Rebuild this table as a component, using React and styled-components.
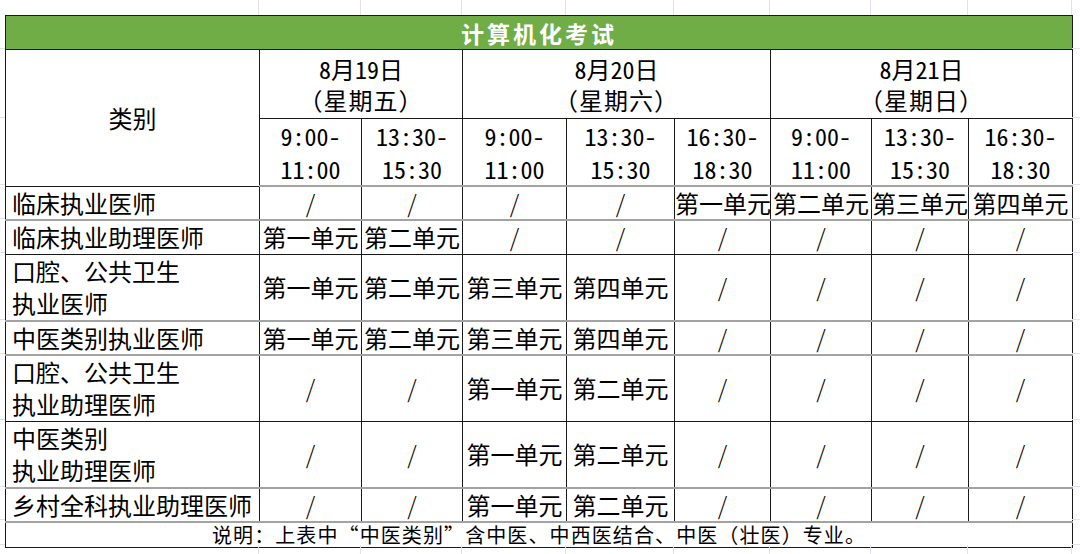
import React from 'react';
import styled, { createGlobalStyle } from 'styled-components';

const COLS = [254, 102, 101, 104, 108, 96, 101, 97, 104];
// heights of the sheet rows (used by the grid margins)
const ROWS = [34, 69, 67, 34, 34, 67, 34, 66, 67, 33, 25];
// the table rows themselves; the time row gives back what its thick border adds
const TABLE_ROWS = [34, 69, 65, 34, 34, 67, 34, 66, 67, 33, 25];

const DATES = [
  { day: '8月19日', week: '（星期五）', span: 2 },
  { day: '8月20日', week: '（星期六）', span: 3 },
  { day: '8月21日', week: '（星期日）', span: 3 },
];

const TIMES = [
  ['9:00-', '11:00'],
  ['13:30-', '15:30'],
  ['9:00-', '11:00'],
  ['13:30-', '15:30'],
  ['16:30-', '18:30'],
  ['9:00-', '11:00'],
  ['13:30-', '15:30'],
  ['16:30-', '18:30'],
];

const S = '/';
const U1 = '第一单元';
const U2 = '第二单元';
const U3 = '第三单元';
const U4 = '第四单元';

// line: how the bottom border of the row is drawn
const BODY = [
  { name: ['临床执业医师'], cells: [S, S, S, S, U1, U2, U3, U4], line: 'soft' },
  { name: ['临床执业助理医师'], cells: [U1, U2, S, S, S, S, S, S], line: 'hard' },
  { name: ['口腔、公共卫生', '执业医师'], cells: [U1, U2, U3, U4, S, S, S, S], line: 'soft' },
  { name: ['中医类别执业医师'], cells: [U1, U2, U3, U4, S, S, S, S], line: 'soft' },
  { name: ['口腔、公共卫生', '执业助理医师'], cells: [S, S, U1, U2, S, S, S, S], line: 'hard' },
  { name: ['中医类别', '执业助理医师'], cells: [S, S, U1, U2, S, S, S, S], line: 'soft' },
  { name: ['乡村全科执业助理医师'], cells: [S, S, U1, U2, S, S, S, S], line: 'soft' },
];

const GlobalStyle = createGlobalStyle`
  html, body {
    margin: 0;
    padding: 0;
    background: #ffffff;
  }
  body {
    font-family: "Noto Sans CJK SC", "Noto Sans", sans-serif;
    color: #000;
  }
`;

const App = () => {
  return (
    <>
      <GlobalStyle />
      <Sheet>
        <Corner />
        <TopStrip>
          {COLS.map((w, i) => (
            <Tick key={i} style={{ width: w }} />
          ))}
        </TopStrip>
        <Corner />

        <SideStrip>
          {ROWS.map((h, i) => (
            <SideTick key={i} style={{ height: h }} />
          ))}
        </SideStrip>

        <Table>
          <colgroup>
            {COLS.map((w, i) => (
              <col key={i} style={{ width: w }} />
            ))}
          </colgroup>
          <tbody>
            <Row $h={TABLE_ROWS[0]} $line="hard">
              <Title colSpan={9}>计算机化考试</Title>
            </Row>
            <Row $h={TABLE_ROWS[1]} $line="hard">
              <Head rowSpan={2}>类别</Head>
              {DATES.map((d) => (
                <DateCell key={d.day} colSpan={d.span}>
                  <Day>{d.day}</Day>
                  <Week>{d.week}</Week>
                </DateCell>
              ))}
            </Row>
            <Row $h={TABLE_ROWS[2]} $line="soft">
              {TIMES.map((t, i) => (
                <TimeCell key={i}>
                  {t[0]}
                  <br />
                  {t[1]}
                </TimeCell>
              ))}
            </Row>
            {BODY.map((r, i) => (
              <Row key={i} $h={TABLE_ROWS[i + 3]} $line={r.line}>
                <Name>
                  {r.name.map((n, j) => (
                    <React.Fragment key={j}>
                      {j > 0 && <br />}
                      {n}
                    </React.Fragment>
                  ))}
                </Name>
                {r.cells.map((c, j) => (
                  <Cell key={j} $slash={c === S}>
                    {c}
                  </Cell>
                ))}
              </Row>
            ))}
            <Row $h={TABLE_ROWS[10]} $line="hard">
              <Note colSpan={9}>说明：上表中“中医类别”含中医、中西医结合、中医（壮医）专业。</Note>
            </Row>
          </tbody>
        </Table>

        <SideStrip>
          {ROWS.map((h, i) => (
            <SideTick key={i} style={{ height: h }} />
          ))}
        </SideStrip>

        <Corner />
        <TopStrip>
          {COLS.map((w, i) => (
            <Tick key={i} style={{ width: w }} />
          ))}
        </TopStrip>
        <Corner />
      </Sheet>
    </>
  );
};

export default App;

const GRID = '#dfe2ea';

const Sheet = styled.div`
  width: 1080px;
  height: 554px;
  display: grid;
  grid-template-columns: 5px 1067px 1fr;
  grid-template-rows: 15px 530px 1fr;
  overflow: hidden;
  background: #fff;
`;

const Corner = styled.div``;

const TopStrip = styled.div`
  display: flex;
`;

const Tick = styled.div`
  flex: none;
  border-right: 1px solid ${GRID};
  box-sizing: border-box;
`;

const SideStrip = styled.div`
  display: flex;
  flex-direction: column;
`;

const SideTick = styled.div`
  flex: none;
  border-bottom: 1px solid ${GRID};
  box-sizing: border-box;
`;

const Table = styled.table`
  width: 1067px;
  table-layout: fixed;
  border-collapse: collapse;
  font-family: "Noto Sans CJK SC", "Noto Sans", sans-serif;
  font-size: 24px;
  color: #000;

  td {
    padding: 0;
    border-left: 1px solid #1a1a1a;
    border-right: 1px solid #1a1a1a;
    white-space: nowrap;
    overflow: visible;
    line-height: 32px;
  }
`;

const Row = styled.tr`
  height: ${(p) => p.$h}px;

  td {
    border-bottom: ${(p) => (p.$line === 'soft' ? '2px solid #a3a3a3' : '1px solid #1a1a1a')};
  }
`;

const Title = styled.td`
  background: #70ad47;
  color: #fff;
  font-weight: 700;
  font-size: 23px;
  letter-spacing: 3px;
  text-align: center;
  border-top: 1px solid #1a1a1a;
`;

const Head = styled.td`
  text-align: center;
  vertical-align: middle;
`;

const DateCell = styled.td`
  text-align: center;
  line-height: 31px !important;
`;

const Day = styled.span`
  display: block;
  font-feature-settings: "hwid";
`;

const Week = styled.span`
  display: block;
  letter-spacing: 1px;
`;

const TimeCell = styled.td`
  text-align: center;
  font-feature-settings: "hwid";
  line-height: 33px !important;
`;

const Name = styled.td`
  text-align: left;
  padding-left: 6px !important;
`;

const Cell = styled.td`
  text-align: center;
  font-weight: ${(p) => (p.$slash ? 300 : 400)};
`;

const Note = styled.td`
  font-size: 20px;
  line-height: 24px !important;
  text-align: center;
  letter-spacing: 1.1px;
`;
